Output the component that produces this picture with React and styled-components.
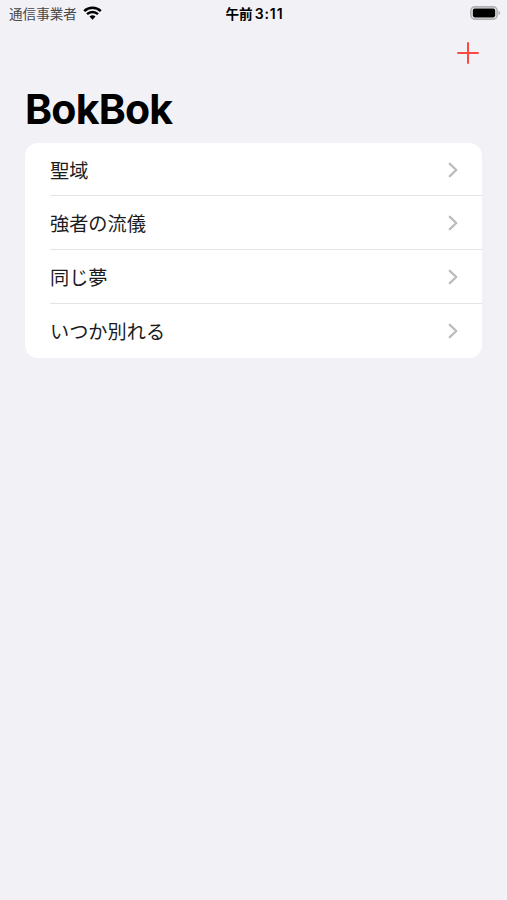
import React from "react";
import styled, { createGlobalStyle } from "styled-components";

const songs = ["聖域", "強者の流儀", "同じ夢", "いつか別れる"];

const App = () => {
  return (
    <>
      <GlobalStyle />
      <Screen>
        <StatusBar>
          <Carrier>
            通信事業者
            <WifiIcon viewBox="0 0 19 14">
              <path d="M1.200 5.100a12 12 0 0 1 16.600 0" />
              <path d="M4 8.200a8 8 0 0 1 11 0" />
              <path className="dot" d="M6.500 10.600a4.600 4.600 0 0 1 6 0L9.500 13.700z" />
            </WifiIcon>
          </Carrier>
          <Time>
            午前<span>3:11</span>
          </Time>
          <BatteryIcon viewBox="0 0 31 14">
            <rect className="shell" x="0.9" y="0.9" width="26.2" height="12.2" rx="3.8" />
            <rect x="2.8" y="2.6" width="22.4" height="8.800" rx="1.800" />
            <path className="cap" d="M28.500 4.900v4.200c2.200-.6 2.200-3.600 0-4.200z" />
          </BatteryIcon>
        </StatusBar>
        <NavBar>
          <AddButton type="button" aria-label="add">
            <svg width="22" height="22" viewBox="0 0 22 22">
              <path d="M11 1v20M1 11h20" />
            </svg>
          </AddButton>
        </NavBar>
        <Title>BokBok</Title>
        <List>
          {songs.map((song) => (
            <Row key={song}>
              <RowContent>
                {song}
                <Chevron viewBox="0 0 10 16">
                  <path d="M1.800 1.800L8.300 8l-6.500 6.200" />
                </Chevron>
              </RowContent>
            </Row>
          ))}
        </List>
      </Screen>
    </>
  );
};

const GlobalStyle = createGlobalStyle`
  * {
    box-sizing: border-box;
  }
  body {
    margin: 0;
    background: #f2f1f6;
    color: #000000;
    font-family: Inter, "Noto Sans CJK JP", sans-serif;
  }
`;
const Screen = styled.main`
  min-height: 100vh;
  background: #f2f1f6;
`;
const StatusBar = styled.header`
  display: grid;
  grid-template-columns: 1fr auto 1fr;
  align-items: center;
  height: 28px;
  padding: 0 6px 0 9px;
`;
const Carrier = styled.div`
  display: flex;
  align-items: center;
  gap: 6px;
  font-size: 13.6px;
  line-height: 20px;
  color: #48484a;
`;
const WifiIcon = styled.svg`
  width: 19px;
  height: 14px;
  margin-top: -3px;
  fill: none;
  stroke: #000000;
  stroke-width: 2.5;
  .dot {
    fill: #000000;
    stroke: none;
  }
`;
const Time = styled.div`
  display: flex;
  align-items: center;
  gap: 2px;
  margin-right: 1px;
  font-size: 13.6px;
  font-weight: 600;
  line-height: 20px;
  span {
    font-size: 14px;
    letter-spacing: 0.9px;
  }
`;
const BatteryIcon = styled.svg`
  width: 31px;
  height: 14px;
  margin-top: -2px;
  justify-self: end;
  .shell {
    fill: none;
    stroke: #b0b0b3;
    stroke-width: 1.6;
  }
  .cap {
    fill: #b0b0b3;
  }
`;
const NavBar = styled.nav`
  display: flex;
  justify-content: flex-end;
  align-items: center;
  height: 49px;
  padding: 0 28px;
`;
const AddButton = styled.button`
  display: flex;
  padding: 0;
  border: 0;
  background: none;
  cursor: pointer;
  svg {
    fill: none;
    stroke: #fb4a43;
    stroke-width: 2;
    stroke-linecap: round;
  }
`;
const Title = styled.h1`
  margin: 0;
  padding: 8px 25px 9.8px;
  font-size: 41px;
  font-weight: 700;
  line-height: 48px;
  letter-spacing: -0.8px;
`;
const List = styled.ul`
  margin: 0 25px;
  padding: 0;
  list-style: none;
  background: #ffffff;
  border-radius: 13px;
`;
const RowContent = styled.div`
  display: flex;
  justify-content: space-between;
  align-items: center;
  height: 100%;
  padding: 1px 24px 0 0;
`;
const Row = styled.li`
  height: 53.7px;
  padding-left: 25px;
  font-size: 19.2px;
  color: #1c1c1e;
  &:not(:last-child) ${RowContent} {
    border-bottom: 1px solid #e4e4e6;
  }
`;
const Chevron = styled.svg`
  width: 10px;
  height: 16px;
  fill: none;
  stroke: #bcbcbf;
  stroke-width: 2.3;
  stroke-linecap: round;
  stroke-linejoin: round;
`;

export default App;
